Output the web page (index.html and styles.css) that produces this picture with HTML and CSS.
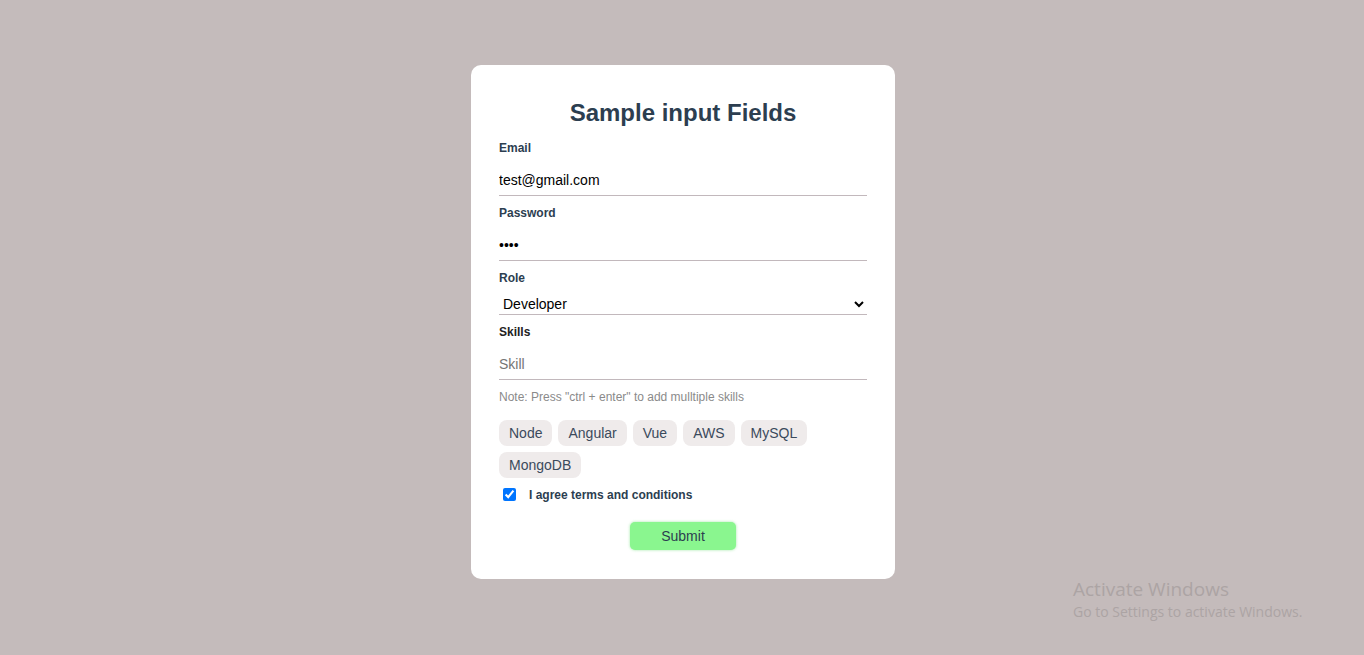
FILE: index.html
```html
<!DOCTYPE html>
<html lang="en">
<head>
<meta charset="utf-8">
<title>Sample input Fields</title>
<link rel="stylesheet" href="styles.css">
</head>
<body>
<main class="page">
  <form class="card" onsubmit="return false">
    <h1 class="title">Sample input Fields</h1>
    <div class="group">
      <label class="label" for="email">Email</label>
      <input class="field" id="email" type="email" value="test@gmail.com">
    </div>
    <div class="group">
      <label class="label" for="pw">Password</label>
      <input class="field" id="pw" type="password" value="abcd">
    </div>
    <div class="group">
      <label class="label" for="role">Role</label>
      <select class="select" id="role">
        <option>Developer</option>
        <option>Designer</option>
      </select>
    </div>
    <div class="group">
      <label class="label label-dark" for="skill">Skills</label>
      <input class="field" id="skill" type="text" placeholder="Skill">
    </div>
    <p class="note">Note: Press "ctrl + enter" to add mulltiple skills</p>
    <div class="chips">
      <span class="chip">Node</span>
      <span class="chip">Angular</span>
      <span class="chip">Vue</span>
      <span class="chip">AWS</span>
      <span class="chip">MySQL</span>
      <span class="chip">MongoDB</span>
    </div>
    <div class="agree">
      <input class="check" type="checkbox" id="terms" checked>
      <label class="agree-label" for="terms">I agree terms and conditions</label>
    </div>
    <div class="actions">
      <button class="submit" type="submit">Submit</button>
    </div>
  </form>
</main>
<div class="watermark">
  <div class="wm-title">Activate Windows</div>
  <div class="wm-sub">Go to Settings to activate Windows.</div>
</div>
</body>
</html>
```

FILE: styles.css
```css
html, body {
  margin: 0;
  padding: 0;
}
body {
  background: #c4bbbb;
  font-family: "Liberation Sans", Arial, sans-serif;
  color: #2c3e50;
  min-height: 655px;
}
.page {
  display: flex;
  justify-content: center;
  padding: 65px 0 0 2px;
}
.card {
  width: 424px;
  box-sizing: border-box;
  background: #fff;
  border-radius: 10px;
  padding: 34px 28px 29px;
  display: flex;
  flex-direction: column;
}
.title {
  margin: 0 0 13px;
  font-size: 24px;
  line-height: 28px;
  font-weight: 700;
  text-align: center;
  color: #2c3e50;
}
.group {
  display: flex;
  flex-direction: column;
  margin-bottom: 9px;
}
.label {
  font-size: 12px;
  line-height: 14px;
  font-weight: 700;
  color: #2c3e50;
  margin: 1px 0 10px;
}
.label-dark {
  color: #222;
}
.field {
  height: 31px;
  box-sizing: border-box;
  border: none;
  border-bottom: 1px solid #c2b8bc;
  padding: 0;
  font-family: "Liberation Sans", Arial, sans-serif;
  font-size: 14px;
  color: #000;
  outline: none;
  background: transparent;
}
.field::placeholder {
  color: #757575;
}
.select {
  height: 21px;
  margin-top: -1px;
  box-sizing: border-box;
  border: none;
  border-bottom: 1px solid #c2b8bc;
  padding: 0;
  font-family: "Liberation Sans", Arial, sans-serif;
  font-size: 14px;
  color: #000;
  background: transparent;
  outline: none;
}
.note {
  margin: 1px 0 16px;
  font-size: 12px;
  line-height: 14px;
  color: #8a8a8a;
}
.chips {
  display: flex;
  flex-wrap: wrap;
  gap: 6px;
  margin-bottom: 10px;
}
.chip {
  height: 26px;
  line-height: 26px;
  padding: 0 10px;
  background: #efebeb;
  border-radius: 8px;
  font-size: 14px;
  color: #3b4a5c;
}
.agree {
  display: flex;
  align-items: center;
  height: 13px;
  margin-bottom: 21px;
}
.check {
  width: 13px;
  height: 13px;
  margin: 0 13px 0 4px;
}
.agree-label {
  font-size: 12px;
  font-weight: 700;
  color: #2c3e50;
}
.actions {
  display: flex;
  justify-content: center;
}
.submit {
  width: 106px;
  height: 28px;
  border: none;
  border-radius: 5px;
  background: #8af68f;
  box-shadow: 0 0 3px rgba(100, 220, 110, 0.6);
  font-family: "Liberation Sans", Arial, sans-serif;
  font-size: 14px;
  color: #2c3e50;
  cursor: pointer;
}
.watermark {
  position: absolute;
  left: 1073px;
  top: 576px;
  color: #aca4a4;
  font-family: "Open Sans", "Noto Sans", sans-serif;
  pointer-events: none;
}
.wm-title {
  font-size: 19px;
  line-height: 26px;
}
.wm-sub {
  font-size: 14px;
  line-height: 20px;
}
```
